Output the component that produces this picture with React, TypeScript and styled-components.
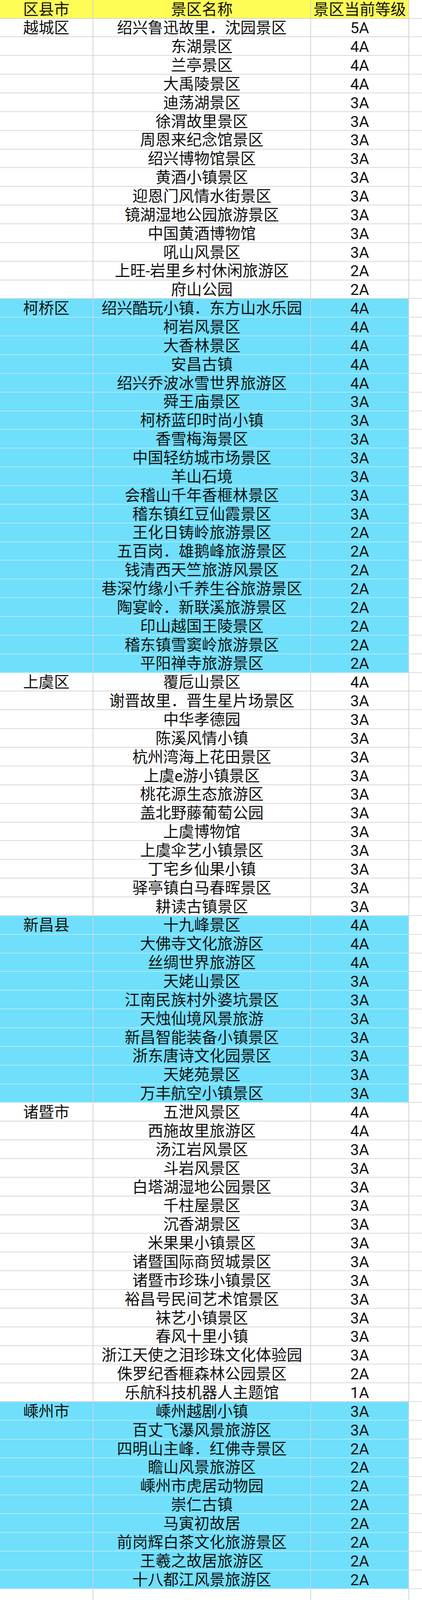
import React from "react";
import styled, { createGlobalStyle, css } from "styled-components";

const Global = createGlobalStyle`
  html, body { margin: 0; padding: 0; background: #ffffff; }
  #root { width: 1080px; }
`;

type Tone = "header" | "white" | "blue";

/* The sheet fills the window; rows share its height in the reference's proportions. */
const Sheet = styled.div`
  width: 1080px;
  height: 100vh;
  max-height: 5109px;
  min-height: 3600px;
  overflow: hidden;
  display: flex;
  flex-direction: column;
  font-family: Roboto, "Noto Sans CJK SC", sans-serif;
  color: #111111;
  background: #ffffff;
`;

const Row = styled.div<{ $weight: number }>`
  display: grid;
  grid-template-columns: 239px 557px 251px 1fr;
  box-sizing: border-box;
  flex: ${(p) => p.$weight} 1 0px;
  min-height: 0;
`;

const toneBg: Record<Tone, string> = {
  header: "#fdfd55",
  white: "#ffffff",
  blue: "#6fdffc",
};

const toneLine: Record<Tone, string> = {
  header: "#d6d6b8",
  white: "#d9d9d9",
  blue: "#b4e9f7",
};

const Cell = styled.div<{ $tone: Tone; $open?: boolean }>`
  box-sizing: border-box;
  min-width: 0;
  min-height: 0;
  display: flex;
  align-items: center;
  justify-content: center;
  padding-top: 3px;
  font-size: 39.5px;
  line-height: 1;
  white-space: nowrap;
  background: ${(p) => toneBg[p.$tone]};
  border-bottom: ${(p) => (p.$open ? "none" : `2px solid ${toneLine[p.$tone]}`)};
  border-right: 2px solid #d3d3d3;
  ${(p) =>
    p.$tone === "blue" &&
    css`
      border-right-color: #c6d9de;
    `}
`;

const Spare = styled.div<{ $open?: boolean }>`
  box-sizing: border-box;
  background: #ffffff;
  border-bottom: ${(p) => (p.$open ? "none" : "2px solid #dcdcdc")};
`;

type Item = [string, string];
type Group = { district: string; tone: Tone; items: Item[] };

const groups: Group[] = [
  {
    district: "越城区",
    tone: "white",
    items: [
      ["绍兴鲁迅故里．沈园景区", "5A"],
      ["东湖景区", "4A"],
      ["兰亭景区", "4A"],
      ["大禹陵景区", "4A"],
      ["迪荡湖景区", "3A"],
      ["徐渭故里景区", "3A"],
      ["周恩来纪念馆景区", "3A"],
      ["绍兴博物馆景区", "3A"],
      ["黄酒小镇景区", "3A"],
      ["迎恩门风情水街景区", "3A"],
      ["镜湖湿地公园旅游景区", "3A"],
      ["中国黄酒博物馆", "3A"],
      ["吼山风景区", "3A"],
      ["上旺-岩里乡村休闲旅游区", "2A"],
      ["府山公园", "2A"],
    ],
  },
  {
    district: "柯桥区",
    tone: "blue",
    items: [
      ["绍兴酷玩小镇．东方山水乐园", "4A"],
      ["柯岩风景区", "4A"],
      ["大香林景区", "4A"],
      ["安昌古镇", "4A"],
      ["绍兴乔波冰雪世界旅游区", "4A"],
      ["舜王庙景区", "3A"],
      ["柯桥蓝印时尚小镇", "3A"],
      ["香雪梅海景区", "3A"],
      ["中国轻纺城市场景区", "3A"],
      ["羊山石境", "3A"],
      ["会稽山千年香榧林景区", "3A"],
      ["稽东镇红豆仙霞景区", "3A"],
      ["王化日铸岭旅游景区", "2A"],
      ["五百岗．雄鹅峰旅游景区", "2A"],
      ["钱清西天竺旅游风景区", "2A"],
      ["巷深竹缘小千养生谷旅游景区", "2A"],
      ["陶宴岭．新联溪旅游景区", "2A"],
      ["印山越国王陵景区", "2A"],
      ["稽东镇雪窦岭旅游景区", "2A"],
      ["平阳禅寺旅游景区", "2A"],
    ],
  },
  {
    district: "上虞区",
    tone: "white",
    items: [
      ["覆卮山景区", "4A"],
      ["谢晋故里．晋生星片场景区", "3A"],
      ["中华孝德园", "3A"],
      ["陈溪风情小镇", "3A"],
      ["杭州湾海上花田景区", "3A"],
      ["上虞e游小镇景区", "3A"],
      ["桃花源生态旅游区", "3A"],
      ["盖北野藤葡萄公园", "3A"],
      ["上虞博物馆", "3A"],
      ["上虞伞艺小镇景区", "3A"],
      ["丁宅乡仙果小镇", "3A"],
      ["驿亭镇白马春晖景区", "3A"],
      ["耕读古镇景区", "3A"],
    ],
  },
  {
    district: "新昌县",
    tone: "blue",
    items: [
      ["十九峰景区", "4A"],
      ["大佛寺文化旅游区", "4A"],
      ["丝绸世界旅游区", "4A"],
      ["天姥山景区", "3A"],
      ["江南民族村外婆坑景区", "3A"],
      ["天烛仙境风景旅游", "3A"],
      ["新昌智能装备小镇景区", "3A"],
      ["浙东唐诗文化园景区", "3A"],
      ["天姥苑景区", "3A"],
      ["万丰航空小镇景区", "3A"],
    ],
  },
  {
    district: "诸暨市",
    tone: "white",
    items: [
      ["五泄风景区", "4A"],
      ["西施故里旅游区", "4A"],
      ["汤江岩风景区", "3A"],
      ["斗岩风景区", "3A"],
      ["白塔湖湿地公园景区", "3A"],
      ["千柱屋景区", "3A"],
      ["沉香湖景区", "3A"],
      ["米果果小镇景区", "3A"],
      ["诸暨国际商贸城景区", "3A"],
      ["诸暨市珍珠小镇景区", "3A"],
      ["裕昌号民间艺术馆景区", "3A"],
      ["袜艺小镇景区", "3A"],
      ["春风十里小镇", "3A"],
      ["浙江天使之泪珍珠文化体验园", "3A"],
      ["侏罗纪香榧森林公园景区", "2A"],
      ["乐航科技机器人主题馆", "1A"],
    ],
  },
  {
    district: "嵊州市",
    tone: "blue",
    items: [
      ["嵊州越剧小镇", "3A"],
      ["百丈飞瀑风景旅游区", "3A"],
      ["四明山主峰．红佛寺景区", "2A"],
      ["瞻山风景旅游区", "2A"],
      ["嵊州市虎居动物园", "2A"],
      ["崇仁古镇", "2A"],
      ["马寅初故居", "2A"],
      ["前岗辉白茶文化旅游景区", "2A"],
      ["王羲之故居旅游区", "2A"],
      ["十八都江风景旅游区", "2A"],
    ],
  },
];

/* Row heights in the reference (px of a 5109px-high page). */
const HEADER_W = 59.3;
const ROW_W = 59.7;
const TAIL_W = 34.9;

export default function App() {
  return (
    <>
      <Global />
      <Sheet>
        <Row $weight={HEADER_W}>
          <Cell $tone="header">区县市</Cell>
          <Cell $tone="header">景区名称</Cell>
          <Cell $tone="header">景区当前等级</Cell>
          <Spare />
        </Row>
        {groups.map((g) =>
          g.items.map(([name, level], i) => (
            <Row key={g.district + name} $weight={ROW_W}>
              <Cell $tone={g.tone}>{i === 0 ? g.district : ""}</Cell>
              <Cell $tone={g.tone}>{name}</Cell>
              <Cell $tone={g.tone}>{level}</Cell>
              <Spare />
            </Row>
          ))
        )}
        <Row $weight={TAIL_W}>
          <Cell $tone="white" $open />
          <Cell $tone="white" $open />
          <Cell $tone="white" $open />
          <Spare $open />
        </Row>
      </Sheet>
    </>
  );
}
